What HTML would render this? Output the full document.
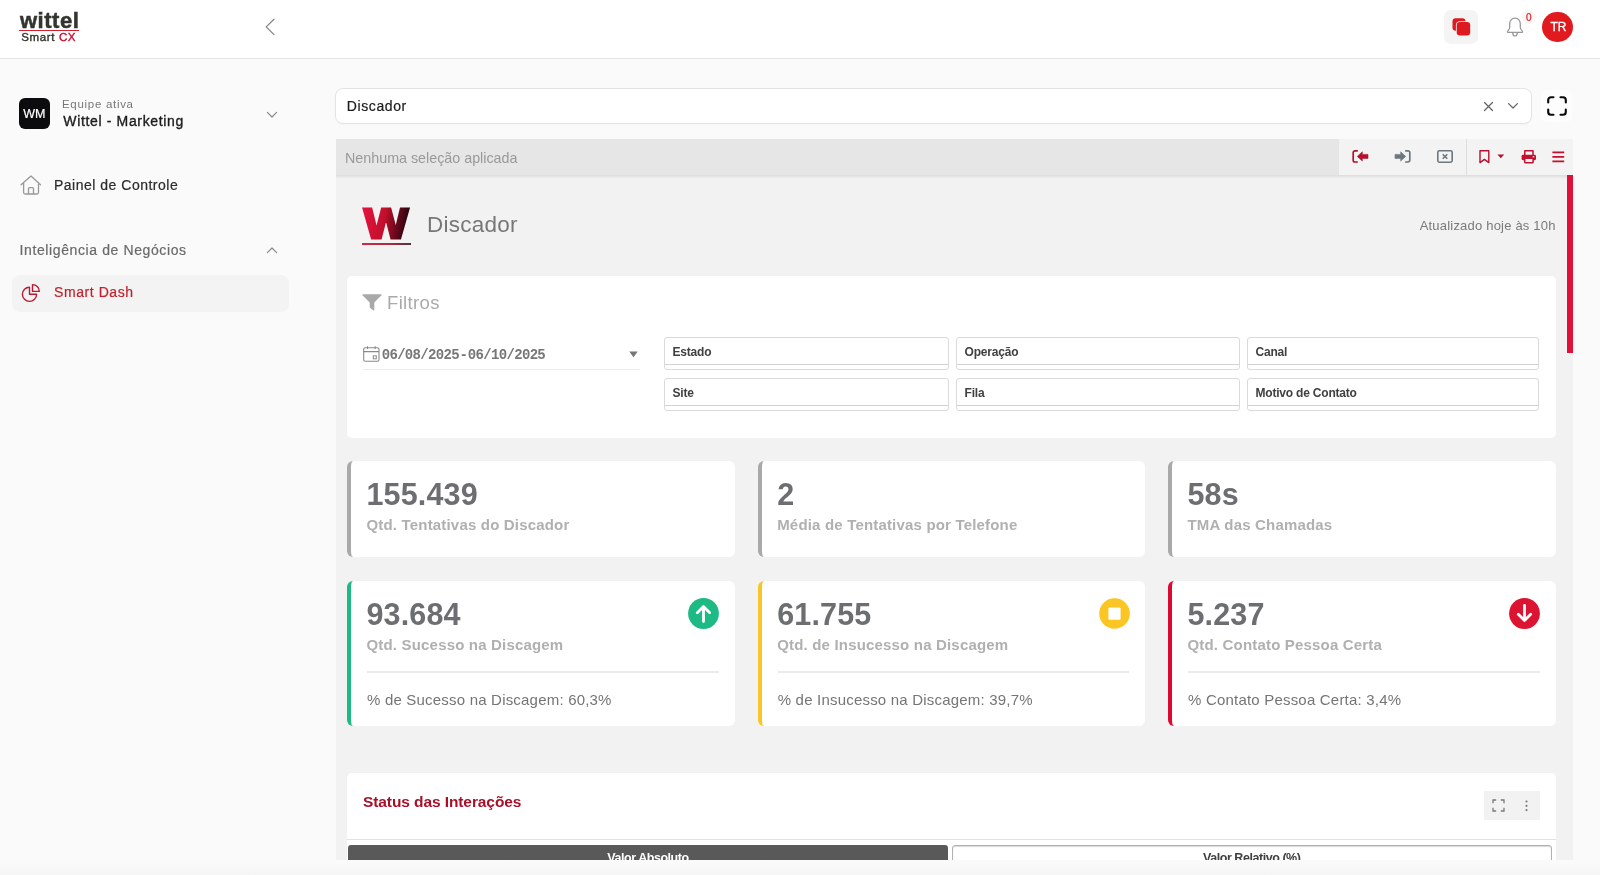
<!DOCTYPE html>
<html lang="pt-BR">
<head>
<meta charset="utf-8">
<title>Wittel Smart CX - Smart Dash</title>
<style>
*{box-sizing:border-box;margin:0;padding:0}
html,body{width:1600px;height:875px;overflow:hidden;background:#fafafa;font-family:"Liberation Sans",sans-serif;color:#222}
body{position:relative;will-change:transform}
.abs{position:absolute}
svg{position:absolute;overflow:visible}
#header{position:absolute;left:0;top:0;width:1600px;height:59px;background:#fff;border-bottom:1px solid #e6e6e6}
.t{position:absolute;white-space:nowrap;line-height:1}
.pp{-webkit-text-stroke:.2px currentColor}
.card{position:absolute;background:#fff;border-radius:5px}
.kpi{position:absolute;background:#fff;border-radius:6px;width:387.500px;border-left:4px solid #a9a9a9}
.kpi .num{position:absolute;left:15.500px;top:18.600px;font-weight:bold;font-size:30.500px;color:#6c6e71;line-height:1;white-space:nowrap;letter-spacing:.15px}
.kpi .lab{position:absolute;left:15.500px;top:56.400px;font-weight:bold;font-size:15px;color:#b0b0b0;line-height:1;white-space:nowrap;letter-spacing:.18px}
.kpi .hr{position:absolute;left:16px;right:16px;top:90px;height:2px;background:#ebebeb}
.kpi .sub{position:absolute;left:16px;top:111.300px;font-size:15px;color:#757575;line-height:1;white-space:nowrap;letter-spacing:.2px}
.kpi.g{border-left-color:#1dba84}
.kpi.y{border-left-color:#fac526}
.kpi.r{border-left-color:#dc0a32}
.fbox{position:absolute;height:33px;background:#fff;border:1px solid #dadada;border-radius:3px}
.fbox:after{content:"";position:absolute;left:0;right:0;bottom:4px;height:1px;background:#d2d2d2}
.fbox span{position:absolute;left:7.500px;top:8px;font-size:12px;font-weight:bold;color:#404040;line-height:1;white-space:nowrap;letter-spacing:-.2px}
</style>
</head>
<body>
<div id="header">
  <div id="lg1" class="t" style="left:19.900px;top:9.700px;font-size:22px;font-weight:bold;color:#33352f;letter-spacing:.55px;-webkit-text-stroke:.5px #33352f">wittel</div>
  <div class="abs" style="left:19px;top:29.500px;width:60px;height:1.500px;background:#d4202e"></div>
  <div id="lg2" class="t" style="left:21.300px;top:31.800px;font-size:11.500px;color:#33352f;letter-spacing:.62px;-webkit-text-stroke:.4px">Smart <span style="color:#c8102e">CX</span></div>
  <svg style="left:262px;top:17px" width="16" height="20" viewBox="0 0 16 20"><path d="M12 2.200 L4.200 9.900 L12 17.600" fill="none" stroke="#858585" stroke-width="1.300" stroke-linecap="round" stroke-linejoin="round"/></svg>
  <div class="abs" style="left:1444px;top:10px;width:34px;height:34px;border-radius:7px;background:#f4f4f4"></div>
  <svg style="left:1452px;top:18px" width="19" height="18" viewBox="0 0 19 18"><rect x=".5" y=".3" width="13" height="12.500" rx="3.200" fill="#dc1a1f"/><rect x="3.900" y="3.200" width="15" height="15" rx="4" fill="#f4f4f4"/><rect x="4.700" y="4" width="13.500" height="13.500" rx="3.300" fill="#dc1a1f"/></svg>
  <svg style="left:1505px;top:16px" width="20" height="22" viewBox="0 0 20 22"><path d="M10 2.200c-3.300 0-5.300 2.500-5.300 5.600v3.400c0 1.500-.8 2.700-2 3.900-.5.500-.2 1.300.5 1.300h13.600c.7 0 1-.8.500-1.300-1.200-1.200-2-2.400-2-3.900V7.800c0-3.100-2-5.600-5.300-5.600z" fill="none" stroke="#999" stroke-width="1.300" stroke-linejoin="round"/><path d="M7.600 16.600c.2 1.800 1.100 3.300 2.400 3.300s2.200-1.500 2.400-3.300" fill="none" stroke="#999" stroke-width="1.300" stroke-linecap="round"/></svg>
  <div class="abs" style="left:1521.500px;top:9.800px;width:14.400px;height:14.400px;border-radius:50%;background:#fdf4f4"></div>
  <div id="bdg" class="t pp" style="left:1526px;top:12.500px;font-size:10px;color:#d02028">0</div>
  <div class="abs" style="left:1542.300px;top:11.500px;width:30.500px;height:30.500px;border-radius:50%;background:#e01a1e"></div>
  <div id="tr" class="t pp" style="left:1550.600px;top:21.400px;font-size:12px;color:#fff;letter-spacing:-.2px;-webkit-text-stroke:.3px #fff">TR</div>
</div>

<div id="sidebar">
  <div class="abs" style="left:19px;top:98px;width:31px;height:31px;border-radius:6px;background:#0c0c0e"></div>
  <div id="wm" class="t pp" style="left:23.300px;top:108.300px;font-size:12.500px;color:#fff">WM</div>
  <div id="s1" class="t" style="left:62px;top:98.800px;font-size:11.500px;color:#777;letter-spacing:.7px">Equipe ativa</div>
  <div id="s2" class="t pp" style="left:63.300px;top:113.800px;font-size:14px;color:#1c1c1c;letter-spacing:.65px;-webkit-text-stroke:.35px #1c1c1c">Wittel - Marketing</div>
  <svg style="left:266px;top:111px" width="12" height="8" viewBox="0 0 12 8"><path d="M1.400 1.400 L6 6 L10.600 1.400" fill="none" stroke="#8a8a8a" stroke-width="1.200" stroke-linecap="round" stroke-linejoin="round"/></svg>
  <svg style="left:20px;top:175px" width="22" height="20" viewBox="0 0 22 20"><path d="M1.100 9.700 L11 0.900 L20.500 9.700 M3.600 7.700 V17.500 Q3.600 19 5.100 19 H17 Q18.500 19 18.500 17.500 V7.700 M8.500 19 V13.600 Q8.500 12.600 9.500 12.600 H12.500 Q13.500 12.600 13.500 13.600 V19" fill="none" stroke="#999" stroke-width="1.300" stroke-linecap="round" stroke-linejoin="round"/></svg>
  <div id="s3" class="t pp" style="left:54px;top:177.500px;font-size:14px;color:#2b2b2b;letter-spacing:.5px">Painel de Controle</div>
  <div id="s4" class="t pp" style="left:19.500px;top:243.100px;font-size:14px;color:#6a6a6a;letter-spacing:.61px">Inteligência de Negócios</div>
  <svg style="left:266px;top:246px" width="12" height="8" viewBox="0 0 12 8"><path d="M1.400 6.600 L6 2 L10.600 6.600" fill="none" stroke="#8a8a8a" stroke-width="1.200" stroke-linecap="round" stroke-linejoin="round"/></svg>
  <div class="abs" style="left:12px;top:274.500px;width:277px;height:37.500px;border-radius:8px;background:#f3f3f3"></div>
  <svg style="left:21px;top:283px" width="20" height="20" viewBox="0 0 20 20"><path d="M8.500 4.200 A7.100 7.100 0 1 0 15.600 11.300 H8.500 Z" fill="none" stroke="#bb1a2e" stroke-width="1.400" stroke-linejoin="round"/><path d="M11.500 1.600 A6.800 6.800 0 0 1 18.300 8.400 H11.500 Z" fill="none" stroke="#bb1a2e" stroke-width="1.400" stroke-linejoin="round"/></svg>
  <div id="s5" class="t pp" style="left:54px;top:285.400px;font-size:14px;color:#c4202c;letter-spacing:.57px">Smart Dash</div>
</div>

<div id="main">
  <div class="abs" style="left:335px;top:88px;width:1197px;height:36px;border-radius:8px;background:#fff;border:1px solid #e4e4e4;box-shadow:0 1px 2px rgba(0,0,0,.03)"></div>
  <div id="sel" class="t pp" style="left:346.700px;top:98.500px;font-size:14px;color:#1b1b1b;letter-spacing:.62px">Discador</div>
  <svg style="left:1483.500px;top:101.500px" width="9" height="9" viewBox="0 0 9 9"><path d="M.5 .5 L8.500 8.500 M8.500 .5 L.5 8.500" stroke="#666" stroke-width="1.300" stroke-linecap="round"/></svg>
  <svg style="left:1508px;top:103px" width="10" height="6" viewBox="0 0 10 6"><path d="M.6 .6 L5 5 L9.400 .6" fill="none" stroke="#666" stroke-width="1.300" stroke-linecap="round" stroke-linejoin="round"/></svg>
  <div class="abs" style="left:1541px;top:90px;width:31px;height:32px;border-radius:6px;background:#fdfdfd"></div>
  <svg style="left:1546.500px;top:96px" width="20" height="20" viewBox="0 0 20 20"><path d="M1.200 6.500 V4 A2.800 2.800 0 0 1 4 1.200 H6.500 M13.500 1.200 H16 A2.800 2.800 0 0 1 18.800 4 V6.500 M18.800 13.500 V16 A2.800 2.800 0 0 1 16 18.800 H13.500 M6.500 18.800 H4 A2.800 2.800 0 0 1 1.200 16 V13.500" fill="none" stroke="#0a0a0a" stroke-width="2.100" stroke-linecap="round"/></svg>

  <div class="abs" style="left:0;top:860px;width:1600px;height:15px;background:linear-gradient(#fbfbfb,#f5f5f5)"></div>
  <div id="dash" class="abs" style="left:335.600px;top:139px;width:1237.400px;height:721px;background:#f2f2f2;overflow:hidden">
<div class="abs" style="left:-335.600px;top:-139px;width:1600px;height:875px">
  <!-- selection bar -->
  <div class="abs" style="left:335px;top:139px;width:1004px;height:35.500px;background:#e6e6e6"></div>
  <div class="abs" style="left:1338.500px;top:139px;width:235px;height:36px;background:#f3f3f3"></div>
  <div class="abs" style="left:335px;top:174.500px;width:1238px;height:4px;background:linear-gradient(rgba(0,0,0,.09),rgba(0,0,0,0))"></div>
  <div class="abs" style="left:1466px;top:139px;width:1px;height:36px;background:#dedede"></div>
  <div id="nsa" class="t" style="left:345px;top:150.800px;font-size:14.300px;color:#999">Nenhuma seleção aplicada</div>
  <!-- toolbar icons -->
  <svg style="left:1351px;top:149px" width="18" height="15" viewBox="0 0 18 15"><path d="M6.200 1.800 H4 A1.800 1.800 0 0 0 2.200 3.600 V11.200 A1.800 1.800 0 0 0 4 13 H6.200" fill="none" stroke="#b5102c" stroke-width="1.700" stroke-linecap="round"/><path d="M6.300 7.400 L11.300 2.800 V5.400 H17 V9.400 H11.300 V12 Z" fill="#b5102c" stroke="#b5102c" stroke-width=".6" stroke-linejoin="round"/></svg>
  <svg style="left:1394px;top:149px" width="18" height="15" viewBox="0 0 18 15"><path d="M11.800 1.800 H14 A1.800 1.800 0 0 1 15.800 3.600 V11.200 A1.800 1.800 0 0 1 14 13 H11.800" fill="none" stroke="#6c7780" stroke-width="1.700" stroke-linecap="round"/><path d="M11.700 7.400 L6.700 2.800 V5.400 H1 V9.400 H6.700 V12 Z" fill="#6c7780" stroke="#6c7780" stroke-width=".6" stroke-linejoin="round"/></svg>
  <svg style="left:1436px;top:149px" width="18" height="15" viewBox="0 0 18 15"><rect x="1.800" y="1.800" width="14.400" height="11.400" rx="1.600" fill="none" stroke="#6c7780" stroke-width="1.600"/><path d="M6.700 5.200 L11.300 9.800 M11.300 5.200 L6.700 9.800" stroke="#6c7780" stroke-width="1.600"/></svg>
  <svg style="left:1478px;top:149px" width="28" height="15" viewBox="0 0 28 15"><path d="M2 1.700 H10.800 V13.600 L6.400 10.400 L2 13.600 Z" fill="none" stroke="#b5102c" stroke-width="1.400" stroke-linejoin="round"/><path d="M19.400 5.600 H26.200 L22.800 9.200 Z" fill="#b5102c"/></svg>
  <svg style="left:1521px;top:149px" width="16" height="15" viewBox="0 0 16 15"><path d="M3.800 6 V1.800 H12 V6" fill="none" stroke="#c2102e" stroke-width="1.500" stroke-linejoin="round"/><rect x=".6" y="5.800" width="14.400" height="5.400" rx="1.400" fill="#c2102e"/><rect x="3.700" y="9.300" width="8.400" height="4.400" rx=".8" fill="#f3f3f3" stroke="#c2102e" stroke-width="1.500"/><rect x="11.700" y="7.200" width="1.600" height="1.200" fill="#f3f3f3"/></svg>
  <svg style="left:1552px;top:151px" width="13" height="12" viewBox="0 0 13 12"><path d="M.4 1.400 H12.200 M.4 5.900 H12.200 M.4 10.300 H12.200" stroke="#c2102e" stroke-width="1.700"/></svg>
  <!-- scrollbar -->
  <div class="abs" style="left:1567.200px;top:175px;width:6px;height:178.300px;background:#e0103a"></div>

  <!-- title -->
  <svg id="wlogo" style="left:356px;top:200px" width="62" height="46" viewBox="0 0 62 46"><defs><linearGradient id="wg" x1="0" y1="0" x2="1" y2="0.150"><stop offset="0.050" stop-color="#e2123d"/><stop offset="0.500" stop-color="#c20f2c"/><stop offset="0.740" stop-color="#750a1e"/><stop offset="1" stop-color="#2e0510"/></linearGradient></defs><text transform="translate(8.100,38.100) scale(1.105,1)" font-family="Liberation Sans, sans-serif" font-weight="bold" font-size="42.300" fill="url(#wg)" stroke="url(#wg)" stroke-width="2.800" stroke-linejoin="miter">W</text></svg>
  <div class="abs" style="left:362px;top:243.200px;width:49px;height:1.800px;background:linear-gradient(90deg,#d02848,#b02840 55%,#55303c)"></div>
  <div id="ttl" class="t" style="left:427px;top:214px;font-size:22.500px;color:#777;letter-spacing:.25px">Discador</div>
  <div id="upd" class="t" style="left:1419.700px;top:219.200px;font-size:13px;color:#7a7a7a;letter-spacing:.2px">Atualizado hoje às 10h</div>

  <!-- filter card -->
  <div class="card" style="left:347px;top:276px;width:1209px;height:161.600px"></div>
  <svg style="left:362px;top:293.500px" width="20" height="17" viewBox="0 0 20 17"><path d="M.8 .3 H19.200 Q20 .5 19.500 1.300 L12.300 8.600 V15.800 Q12.200 16.700 11.300 16.200 L8.200 14 Q7.700 13.600 7.700 13 V8.600 L.5 1.300 Q0 .5 .8 .3 Z" fill="#a9a9a9"/></svg>
  <div id="flt" class="t" style="left:387px;top:293.900px;font-size:18.500px;color:#aaa;letter-spacing:.35px">Filtros</div>
  <svg style="left:362.500px;top:345.500px" width="17" height="16" viewBox="0 0 17 16"><rect x=".7" y="1.800" width="15.300" height="13.500" rx="1.500" fill="none" stroke="#8a8a8a" stroke-width="1.100"/><path d="M.7 5.600 H16 M4.500 .3 V3 M12.200 .3 V3" stroke="#8a8a8a" stroke-width="1.100"/><rect x="10.300" y="9.800" width="3" height="3" fill="none" stroke="#8a8a8a" stroke-width="1"/></svg>
  <div id="dte" class="t" style="left:381.700px;top:348.100px;font-size:14px;font-weight:bold;color:#777;font-family:'Liberation Mono',monospace;letter-spacing:-.68px;word-spacing:-7.100px">06/08/2025 - 06/10/2025</div>
  <div class="abs" style="left:363px;top:369px;width:277px;height:1px;background:#ececec"></div>
  <svg style="left:628.500px;top:351.300px" width="9" height="7" viewBox="0 0 9 7"><path d="M.3 .4 H8.700 L4.500 6.300 Z" fill="#777"/></svg>

  <div id="f1" class="fbox" style="left:664px;top:337px;width:284.500px"><span>Estado</span></div>
  <div id="f2" class="fbox" style="left:956px;top:337px;width:284px"><span>Operação</span></div>
  <div id="f3" class="fbox" style="left:1247px;top:337px;width:292px"><span>Canal</span></div>
  <div id="f4" class="fbox" style="left:664px;top:378px;width:284.500px"><span>Site</span></div>
  <div id="f5" class="fbox" style="left:956px;top:378px;width:284px"><span>Fila</span></div>
  <div id="f6" class="fbox" style="left:1247px;top:378px;width:292px"><span>Motivo de Contato</span></div>

  <!-- KPI row 1 -->
  <div id="k1" class="kpi" style="left:347px;top:460.500px;height:96.500px"><div class="num">155.439</div><div class="lab">Qtd. Tentativas do Discador</div></div>
  <div id="k2" class="kpi" style="left:757.700px;top:460.500px;height:96.500px"><div class="num">2</div><div class="lab">Média de Tentativas por Telefone</div></div>
  <div id="k3" class="kpi" style="left:1168px;top:460.500px;height:96.500px"><div class="num">58s</div><div class="lab">TMA das Chamadas</div></div>
  <!-- KPI row 2 -->
  <div id="k4" class="kpi g" style="left:347px;top:580.500px;height:145.500px"><div class="num">93.684</div><div class="lab">Qtd. Sucesso na Discagem</div><div class="hr"></div><div class="sub">% de Sucesso na Discagem: 60,3%</div>
    <svg style="left:337px;top:17.500px" width="31" height="31" viewBox="0 0 31 31"><circle cx="15.500" cy="15.500" r="15.400" fill="#1dba84"/><path d="M15.500 23.500 V9 M9.300 14.800 L15.500 8.600 L21.700 14.800" fill="none" stroke="#fff" stroke-width="2.800" stroke-linecap="round" stroke-linejoin="round"/></svg></div>
  <div id="k5" class="kpi y" style="left:757.700px;top:580.500px;height:145.500px"><div class="num">61.755</div><div class="lab">Qtd. de Insucesso na Discagem</div><div class="hr"></div><div class="sub">% de Insucesso na Discagem: 39,7%</div>
    <svg style="left:337.300px;top:17.500px" width="31" height="31" viewBox="0 0 31 31"><circle cx="15.500" cy="15.500" r="15.300" fill="#fbc524"/><rect x="9.400" y="9.500" width="12.200" height="12.200" rx="1.200" fill="#fff"/></svg></div>
  <div id="k6" class="kpi r" style="left:1168px;top:580.500px;height:145.500px"><div class="num">5.237</div><div class="lab">Qtd. Contato Pessoa Certa</div><div class="hr"></div><div class="sub">% Contato Pessoa Certa: 3,4%</div>
    <svg style="left:337px;top:17.500px" width="31" height="31" viewBox="0 0 31 31"><circle cx="15.500" cy="15.500" r="15.400" fill="#dc1431"/><path d="M15.500 7.500 V22 M9.300 16.200 L15.500 22.400 L21.700 16.200" fill="none" stroke="#fff" stroke-width="2.800" stroke-linecap="round" stroke-linejoin="round"/></svg></div>

  <!-- chart card -->
  <div class="card" style="left:347px;top:772.500px;width:1209px;height:120px"></div>
  <div id="cht" class="t" style="left:363px;top:794.400px;font-size:15.500px;font-weight:bold;color:#a8102a;letter-spacing:-.09px">Status das Interações</div>
  <div class="abs" style="left:1484px;top:791px;width:55.500px;height:28.500px;background:#f2f2f2"></div>
  <svg style="left:1492px;top:799px" width="13" height="13" viewBox="0 0 13 13"><path d="M1 4.200 V1 H4.200 M8.800 1 H12 V4.200 M12 8.800 V12 H8.800 M4.200 12 H1 V8.800" fill="none" stroke="#7a7a7a" stroke-width="1.300"/></svg>
  <svg style="left:1524.500px;top:800px" width="3" height="12" viewBox="0 0 3 12"><circle cx="1.500" cy="1.500" r="1.100" fill="#7a7a7a"/><circle cx="1.500" cy="5.800" r="1.100" fill="#7a7a7a"/><circle cx="1.500" cy="10.100" r="1.100" fill="#7a7a7a"/></svg>
  <div class="abs" style="left:347px;top:838.500px;width:1209px;height:1.500px;background:#e2e2e2"></div>
  <div class="abs" style="left:348px;top:844.500px;width:600px;height:30px;border-radius:3px;background:#595959"></div>
  <div id="va" class="t" style="left:348px;width:600px;text-align:center;top:851.500px;font-size:12.500px;font-weight:bold;color:#fff;letter-spacing:-.45px">Valor Absoluto</div>
  <div class="abs" style="left:951.500px;top:844.500px;width:600.500px;height:30px;border-radius:3px;background:#fff;border:1px solid #b0b0b0;box-shadow:inset 0 1px 1px rgba(0,0,0,.15)"></div>
  <div id="vr" class="t" style="left:951.500px;width:600.500px;text-align:center;top:851.500px;font-size:12.500px;font-weight:bold;color:#404040;letter-spacing:-.45px">Valor Relativo (%)</div>
</div>
  </div>
</div>
</body>
</html>
